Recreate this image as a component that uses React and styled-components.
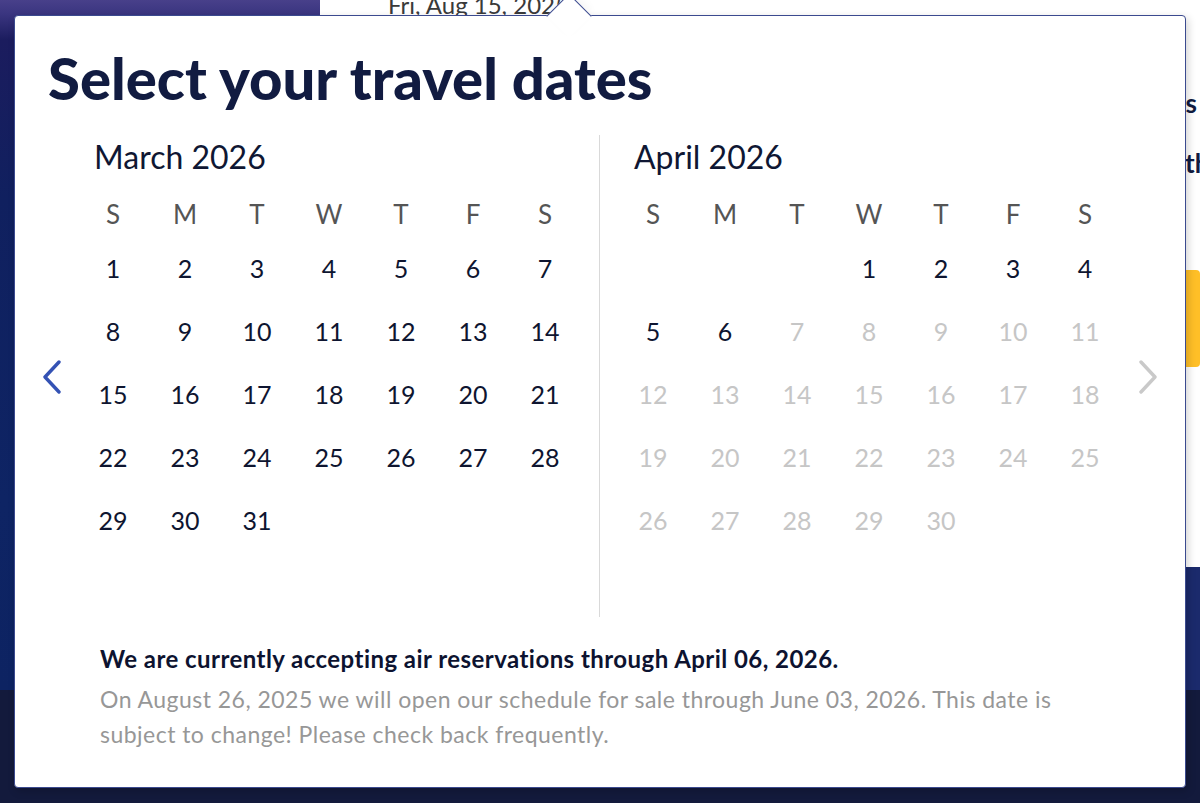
import styled, { createGlobalStyle } from 'styled-components';

const GlobalStyle = createGlobalStyle`
  html, body {
    margin: 0;
    padding: 0;
    background: #121a3b;
  }
  body {
    font-family: Lato, "Open Sans", sans-serif;
  }
`;

const Page = styled.div`
  position: relative;
  width: 1200px;
  height: 803px;
  overflow: hidden;
  background: #131a3c;
`;

const Hero = styled.div`
  display: flex;
  height: 690px;
`;

const LeftPanel = styled.div`
  width: 320px;
  background: linear-gradient(180deg, #48408a 0, #3a3580 14px, #1b1c5e 40px, #10205f 200px, #0e2464 500px, #0d2362 690px);
`;

const RightPanel = styled.div`
  flex: 1;
  display: flex;
  flex-direction: column;
`;

const SearchArea = styled.div`
  height: 567px;
  background: #fff;
  display: flex;
  flex-direction: column;
`;

const DateInput = styled.div`
  height: 15px;
  padding-left: 68px;
  font-size: 24px;
  line-height: 15px;
  color: #3a3a3a;
  white-space: nowrap;
  span {
    position: relative;
    top: -3px;
  }
`;

const SearchBody = styled.div`
  flex: 1;
  display: flex;
  justify-content: flex-end;
`;

const Aside = styled.div`
  width: 100px;
  padding-top: 61px;
  display: flex;
  flex-direction: column;
  font-weight: 700;
  font-size: 26px;
  color: #111b41;
  white-space: nowrap;
`;

const AsideHeading = styled.div`
  text-align: right;
  padding-right: 3px;
  line-height: 54px;
`;

const AsideLine = styled.div`
  padding-left: 85px;
  line-height: 54px;
  margin-top: 6px;
`;

const YellowButton = styled.div`
  margin-top: 80px;
  height: 97px;
  background: #ffbf27;
  border-radius: 4px;
`;

const NavyBand = styled.div`
  flex: 1;
  background: #1b2a6c;
`;

const Dialog = styled.div`
  position: absolute;
  top: 15px;
  left: 14px;
  width: 1172px;
  box-sizing: border-box;
  background: #fff;
  border: 1px solid #3b4a8f;
  border-radius: 4px;
  box-shadow: 2px 3px 8px rgba(0, 0, 0, 0.18);
  padding-bottom: 35px;
`;

const Caret = styled.div`
  position: absolute;
  top: -16px;
  left: 538px;
  width: 31px;
  height: 31px;
  background: #fff;
  border-top: 1px solid #3b4a8f;
  border-left: 1px solid #3b4a8f;
  transform: rotate(45deg);
  box-shadow: -4px -4px 8px rgba(0, 0, 0, 0.04);
`;

const Title = styled.h1`
  margin: 30px 0 0 33px;
  font-size: 58px;
  line-height: 64px;
  font-weight: 900;
  letter-spacing: 0;
  color: #111b41;
`;

const CalendarRow = styled.div`
  margin-top: 25px;
  display: flex;
  height: 482px;
`;

const NavZone = styled.div`
  display: flex;
  align-items: center;
  justify-content: ${(p) => (p.$side === 'prev' ? 'flex-end' : 'flex-start')};
  width: ${(p) => (p.$side === 'prev' ? '62px' : 'auto')};
  flex: ${(p) => (p.$side === 'prev' ? 'none' : '1')};
  padding: ${(p) => (p.$side === 'prev' ? '0 15px 0 0' : '0 0 0 17px')};
  box-sizing: border-box;
`;

const NavButton = styled.button`
  border: 0;
  background: none;
  padding: 0;
  display: flex;
  cursor: pointer;
  margin-top: 2px;
`;

const Divider = styled.div`
  width: 36px;
  display: flex;
  justify-content: center;
  &::after {
    content: '';
    width: 1px;
    background: #d9d9d9;
  }
`;

const Month = styled.div`
  width: 504px;
  padding-top: 2px;
`;

const MonthTitle = styled.div`
  padding-left: 17px;
  font-size: 32px;
  line-height: 40px;
  color: #0f1733;
`;

const Grid = styled.div`
  display: grid;
  grid-template-columns: repeat(7, 72px);
`;

const WeekRow = styled(Grid)`
  margin-top: 15px;
  height: 44px;
  align-items: center;
  font-size: 26px;
  color: #555;
  text-align: center;
`;

const DaysGrid = styled(Grid)`
  grid-auto-rows: 63px;
`;

const Day = styled.div`
  display: flex;
  align-items: center;
  justify-content: center;
  font-size: 25px;
  color: ${(p) => (p.$disabled ? '#c6c6c6' : '#0e1530')};
`;

const Note = styled.div`
  margin-top: 28px;
  padding-left: 85px;
  width: 1000px;
`;

const NoteStrong = styled.div`
  font-size: 24px;
  line-height: 28px;
  font-weight: 700;
  letter-spacing: 0.45px;
  color: #0d1330;
`;

const NoteText = styled.p`
  margin: 9px 0 0;
  font-size: 23px;
  line-height: 35px;
  letter-spacing: 0.47px;
  color: #979797;
`;

const Chevron = ({ dir, color }) => (
  <svg width="20" height="34" viewBox="0 0 20 34" fill="none">
    <polyline
      points={dir === 'left' ? '17,2 3,17 17,32' : '3,2 17,17 3,32'}
      stroke={color}
      strokeWidth="3.4"
      strokeLinecap="round"
      strokeLinejoin="round"
    />
  </svg>
);

const WEEKDAYS = ['S', 'M', 'T', 'W', 'T', 'F', 'S'];

const CalendarMonth = ({ title, offset, days, lastEnabled }) => {
  const cells = [];
  for (let i = 0; i < offset; i++) cells.push(<Day key={`e${i}`} />);
  for (let d = 1; d <= days; d++) {
    cells.push(
      <Day key={d} $disabled={d > lastEnabled}>
        {d}
      </Day>
    );
  }
  return (
    <Month>
      <MonthTitle>{title}</MonthTitle>
      <WeekRow>
        {WEEKDAYS.map((w, i) => (
          <div key={i}>{w}</div>
        ))}
      </WeekRow>
      <DaysGrid>{cells}</DaysGrid>
    </Month>
  );
};

export default function App() {
  return (
    <>
      <GlobalStyle />
      <Page>
        <Hero>
          <LeftPanel />
          <RightPanel>
            <SearchArea>
              <DateInput>
                <span>Fri, Aug 15, 2025</span>
              </DateInput>
              <SearchBody>
                <Aside>
                  <AsideHeading>fares</AsideHeading>
                  <AsideLine>the lowest</AsideLine>
                  <YellowButton />
                </Aside>
              </SearchBody>
            </SearchArea>
            <NavyBand />
          </RightPanel>
        </Hero>

        <Dialog>
          <Caret />
          <Title>Select your travel dates</Title>
          <CalendarRow>
            <NavZone $side="prev">
              <NavButton aria-label="Previous month">
                <Chevron dir="left" color="#3452b4" />
              </NavButton>
            </NavZone>
            <CalendarMonth title="March 2026" offset={0} days={31} lastEnabled={31} />
            <Divider />
            <CalendarMonth title="April 2026" offset={3} days={30} lastEnabled={6} />
            <NavZone $side="next">
              <NavButton aria-label="Next month">
                <Chevron dir="right" color="#c9c9c9" />
              </NavButton>
            </NavZone>
          </CalendarRow>
          <Note>
            <NoteStrong>We are currently accepting air reservations through April 06, 2026.</NoteStrong>
            <NoteText>
              On August 26, 2025 we will open our schedule for sale through June 03, 2026. This date is
              subject to change! Please check back frequently.
            </NoteText>
          </Note>
        </Dialog>
      </Page>
    </>
  );
}
